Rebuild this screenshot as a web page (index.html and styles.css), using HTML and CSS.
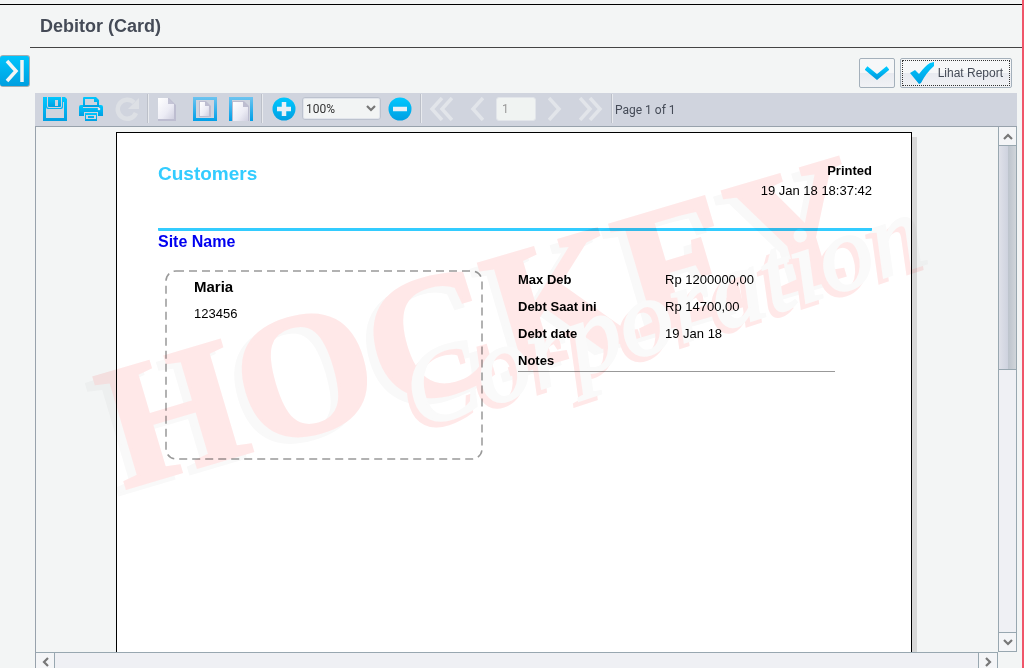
FILE: index.html
```html
<!DOCTYPE html>
<html lang="id">
<head>
<meta charset="utf-8">
<title>Debitor (Card)</title>
<link rel="stylesheet" href="styles.css">
</head>
<body>
<svg class="defs" aria-hidden="true">
  <defs>
    <linearGradient id="blue" x1="0" y1="0" x2="0" y2="1"><stop offset="0" stop-color="#00c8ff"/><stop offset="1" stop-color="#009fe2"/></linearGradient>
    <linearGradient id="sheet" x1="0" y1="0" x2="1" y2="1"><stop offset="0" stop-color="#fff"/><stop offset="0.6" stop-color="#ececf5"/><stop offset="1" stop-color="#d0d0e0"/></linearGradient>
    <linearGradient id="frame" gradientUnits="userSpaceOnUse" x1="0" y1="0" x2="0" y2="24"><stop offset="0" stop-color="#6dc4f0"/><stop offset="1" stop-color="#00a0e8"/></linearGradient>
  </defs>
</svg>
<div class="app">
  <header class="title"><h1>Debitor (Card)</h1></header>
  <div class="main">
    <aside class="side">
      <button class="expand" aria-label="Expand panel"><svg width="30" height="30" viewBox="0 0 30 30"><path d="M7 5 L16 15 L7 25" fill="none" stroke="#f3f5f5" stroke-width="3.5"/><path d="M22 4V26" stroke="#f3f5f5" stroke-width="3.5"/></svg></button>
    </aside>
    <div class="content">
      <div class="actions">
        <button class="btn more" aria-label="More"><svg width="24" height="14" viewBox="0 0 24 14"><path d="M1 2 L12 11 L23 2" fill="none" stroke="url(#blue)" stroke-width="4.5"/></svg></button>
        <button class="btn report"><svg width="24" height="22" viewBox="0 0 24 22"><path d="M0 11 L5 8 L9 12 Q15 4 20 1 L24 0 V4 Q16 11 11 21 L9 22 Z" fill="url(#blue)"/></svg><span>Lihat Report</span></button>
      </div>
      <div class="toolbar">
        <button class="tool" aria-label="Save"><svg width="24" height="24" viewBox="0 0 24 24"><path fill-rule="evenodd" fill="url(#blue)" d="M0 0H4V9Q4 11 6 11H17Q19 11 19 9V0H22L24 2V24H0Z M3 13V21H21V5H20V10Q20 12 18 12H5Q3 12 3 10Z"/><path fill-rule="evenodd" fill="url(#blue)" d="M5 0H18V9Q18 10 17 10H6Q5 10 5 9Z M12 3V9H15V3Z"/></svg></button>
        <button class="tool" aria-label="Print"><svg width="24" height="24" viewBox="0 0 24 24"><path fill-rule="evenodd" fill="url(#blue)" d="M4 1Q4 0 5 0H17L20 3V10H4Z M6 2V8H18V5H15V2Z"/><path fill="url(#blue)" d="M2 8H4V11H20V8H22Q24 8 24 10V19H19V15H5V19H0V10Q0 8 2 8Z"/><circle cx="20" cy="12" r="1.3" fill="#e0e6ee"/><path fill-rule="evenodd" fill="url(#blue)" d="M6 16H18V24H6Z M7 18V22H17V18Z M9 19H15V21H9Z"/></svg></button>
        <button class="tool" aria-label="Refresh" disabled><svg width="24" height="24" viewBox="0 0 24 24"><path d="M19 5.5A9.500 9.500 0 1 0 21 16" fill="none" stroke="#dde0e5" stroke-width="4.500"/><path d="M24 1V12H13Z" fill="#dde0e5"/></svg></button>
        <span class="sep"></span>
        <button class="tool" aria-label="Actual size"><svg width="24" height="24" viewBox="0 0 24 24"><path d="M1 1H12L19 8V24H1Z" fill="#bdbdd0"/><path d="M1 1H11V7H17V22H1Z" fill="url(#sheet)"/><path d="M11 1V7H17Z" fill="#c4c4d6"/></svg></button>
        <button class="tool" aria-label="Fit page"><svg width="24" height="24" viewBox="0 0 24 24"><path d="M1.500 1.500H22.500V22.500H1.500Z" fill="none" stroke="url(#frame)" stroke-width="3"/><path d="M6 4H13L18 9V20H6Z" fill="#bdbdd0"/><path d="M7 5H12V9H16V19H7Z" fill="url(#sheet)"/></svg></button>
        <button class="tool" aria-label="Fit width"><svg width="24" height="24" viewBox="0 0 24 24"><path d="M1.500 24V1.500H22.500V24" fill="none" stroke="url(#frame)" stroke-width="3"/><path d="M3 4H15L20 9V24H3Z" fill="#bdbdd0"/><path d="M4 5H14V10H19V24H4Z" fill="url(#sheet)"/></svg></button>
        <span class="sep"></span>
        <div class="zoom">
          <button class="tool" aria-label="Zoom in"><svg width="24" height="24" viewBox="0 0 24 24"><circle cx="12" cy="12" r="11.5" fill="url(#blue)"/><path d="M12 5V19M5 12H19" stroke="#e8f0f6" stroke-width="4.500"/></svg></button>
          <label class="pick"><select aria-label="Zoom"><option>100%</option></select><svg width="10" height="7" viewBox="0 0 10 7"><path d="M1 1L5 5L9 1" fill="none" stroke="#777" stroke-width="2.2"/></svg></label>
          <button class="tool" aria-label="Zoom out"><svg width="24" height="24" viewBox="0 0 24 24"><circle cx="12" cy="12" r="11.5" fill="url(#blue)"/><path d="M5 12H19" stroke="#e8f0f6" stroke-width="4.500"/></svg></button>
        </div>
        <span class="sep"></span>
        <div class="pager">
          <button class="tool" aria-label="First page" disabled><svg width="24" height="24" viewBox="0 0 24 24"><path d="M13 1L3 12L13 23M23 1L13 12L23 23" fill="none" stroke="#e2e5ea" stroke-width="3.500"/></svg></button>
          <button class="tool" aria-label="Previous page" disabled><svg width="14" height="24" viewBox="0 0 14 24"><path d="M13 1L3 12L13 23" fill="none" stroke="#e2e5ea" stroke-width="3.500"/></svg></button>
          <input type="text" value="1" aria-label="Page number" disabled>
          <button class="tool" aria-label="Next page" disabled><svg width="14" height="24" viewBox="0 0 14 24"><path d="M1 1L11 12L1 23" fill="none" stroke="#e2e5ea" stroke-width="3.500"/></svg></button>
          <button class="tool" aria-label="Last page" disabled><svg width="24" height="24" viewBox="0 0 24 24"><path d="M1 1L11 12L1 23M11 1L21 12L11 23" fill="none" stroke="#e2e5ea" stroke-width="3.500"/></svg></button>
        </div>
        <span class="sep last"></span>
        <span class="count">Page 1 of 1</span>
      </div>
      <div class="viewer">
        <div class="stage">
          <article class="paper">
            <div class="top">
              <h2>Customers</h2>
              <div class="printed"><b>Printed</b><span>19 Jan 18 18:37:42</span></div>
            </div>
            <h3>Site Name</h3>
            <div class="cols">
              <section class="card">
                <svg class="dash" aria-hidden="true"><rect x="0" y="1" rx="10" ry="10"/></svg>
                <b>Maria</b><span>123456</span>
              </section>
              <dl class="facts">
                <dt>Max Deb</dt><dd>Rp 1200000,00</dd>
                <dt>Debt Saat ini</dt><dd>Rp 14700,00</dd>
                <dt>Debt date</dt><dd>19 Jan 18</dd>
                <dt>Notes</dt><dd></dd>
              </dl>
            </div>
            <svg class="mark">
              <g transform="translate(7 356) rotate(-16.5)">
                <text class="word grey" x="-9" y="4">HOCKEY</text>
                <text class="word pink" x="0" y="0">HOCKEY</text>
              </g>
              <g transform="translate(301 296) rotate(-18)">
                <text class="script pink" x="-6" y="4">Corporation</text>
                <text class="script pale" x="0" y="0">Corporation</text>
              </g>
            </svg>
          </article>
        </div>
        <div class="vbar">
          <button class="arrow" aria-label="Scroll up"><svg width="10" height="7" viewBox="0 0 10 7"><path d="M1 6L5 2L9 6" fill="none" stroke="#777" stroke-width="2.2"/></svg></button>
          <div class="thumb"></div>
          <button class="arrow down" aria-label="Scroll down"><svg width="10" height="7" viewBox="0 0 10 7"><path d="M1 1L5 5L9 1" fill="none" stroke="#777" stroke-width="2.2"/></svg></button>
        </div>
        <div class="hbar">
          <button class="arrow" aria-label="Scroll left"><svg width="7" height="10" viewBox="0 0 7 10"><path d="M6 1L2 5L6 9" fill="none" stroke="#777" stroke-width="2.2"/></svg></button>
          <button class="arrow" aria-label="Scroll right"><svg width="7" height="10" viewBox="0 0 7 10"><path d="M1 1L5 5L1 9" fill="none" stroke="#777" stroke-width="2.2"/></svg></button>
        </div>
      </div>
    </div>
  </div>
</div>
</body>
</html>
```

FILE: styles.css
```css
* { box-sizing: border-box; }
body { margin: 0; background: #f3f5f5; color: #454b57; font: 12px/16px "Liberation Sans", Arial, sans-serif; }
h1, h2, h3, dl, dd { margin: 0; }
button { padding: 0; border: 0; background: none; color: inherit; font: inherit; }
svg { display: block; }
.defs { position: absolute; width: 0; height: 0; }

.app { display: flex; flex-direction: column; height: 100vh; padding-top: 4px; border-right: 2px solid #f0566a; overflow: hidden; }
.title { border-top: 1px solid #000; padding-left: 30px; }
.title h1 { height: 43px; padding-left: 10px; border-bottom: 1px solid #444; font-size: 18px; line-height: 42px; }
.main { flex: 1; display: flex; min-height: 0; }
.side { width: 35px; padding-top: 7px; }
.expand { width: 30px; height: 32px; border: 1px solid #a5acb0; border-left: 0; border-radius: 3px; background: linear-gradient(#00c4fc, #009fe0); }
.content { flex: 1; display: flex; flex-direction: column; min-width: 0; padding-right: 5px; }

.actions { display: flex; justify-content: flex-end; gap: 5px; height: 45px; padding: 10px 5px 5px 0; }
.btn { display: flex; align-items: center; justify-content: center; height: 30px; border: 1px solid #a4b0bb; border-radius: 2px; background: linear-gradient(#f6f7f8 50%, #e8eaf0 50%, #f1f2f5); }
.more { width: 36px; }
.report { gap: 4px; padding: 0 8px 0 9px; outline: 1px dotted #333; outline-offset: -3px; }

.toolbar { display: flex; align-items: center; height: 33px; padding: 0 8px 2px; background: #d0d4de; }
.tool { margin-right: 12px; }
.sep { width: 2px; height: 29px; margin: 0 8px 0 -4px; border-left: 1px solid #bcc0c9; border-right: 1px solid #e8eaee; }
.zoom, .pager { display: flex; align-items: center; }
.zoom { margin-left: 1px; }
.zoom .tool { margin-right: 6px; }
.zoom .tool:last-child { margin-right: 12px; }
.pick { display: flex; align-items: center; width: 79px; height: 23px; margin-right: 7px; padding: 0 4px 0 3px; border: 1px solid #bcc2ce; border-radius: 3px; background: #f2f4f4; box-shadow: inset 0 0 0 1px #e2e5ec; }
.pick select { flex: 1; min-width: 0; padding: 0; border: 0; appearance: none; background: none; color: #333; font: 12px/16px Roboto, sans-serif; }
.pager .tool { margin-right: 17px; }
.pager .tool:nth-child(2), .pager input { margin-right: 12px; }
.pager .tool:last-child { margin-right: 12px; }
.pager { margin-left: -1px; }
.pager input { width: 40px; height: 24px; padding: 0 5px; border: 1px solid #e2e5ea; border-radius: 3px; background: #f0f3f2; color: #999; font: 12px/16px Roboto, sans-serif; }
.sep.last { margin-right: 2px; }
.count { padding-top: 2px; font: 12px/16px Roboto, sans-serif; }

.viewer { flex: 1; display: grid; grid-template: minmax(0, 1fr) 16px / minmax(0, 1fr) 19px; min-height: 0; border-top: 1px solid #98a2ac; border-left: 1px solid #98a2ac; }
.stage { overflow: hidden; padding: 5px 86px 0 80px; }
.paper { position: relative; height: 100%; padding: 0 39px 0 41px; border: 1px solid #000; border-bottom: 0; background: #fff; box-shadow: 5px 5px 0 #d8d8d8; color: #000; font-size: 13px; }
.top { display: flex; justify-content: space-between; height: 98px; padding-top: 28px; border-bottom: 3px solid #33ccff; border-radius: 1px; }
.top h2 { color: #33ccff; font-size: 19px; line-height: 25px; }
.printed { display: flex; flex-direction: column; text-align: right; line-height: 20px; }
h3 { color: #0000f0; font-size: 16px; line-height: 22px; }
.cols { display: grid; grid-template-columns: 316px 317px; gap: 36px; padding: 17px 0 0 8px; }
.card { position: relative; display: flex; flex-direction: column; height: 190px; padding: 7px 28px; }
.card b { font-size: 15px; line-height: 20px; }
.card span { line-height: 33px; }
.dash { position: absolute; inset: 0; width: 100%; height: 100%; overflow: visible; }
.dash rect { width: 100%; height: 188px; fill: none; stroke: #999; stroke-width: 1.5; stroke-dasharray: 8 5; }
.facts { display: grid; grid-template-columns: 147px 1fr; grid-auto-rows: 27px; align-self: start; height: 102px; border-bottom: 1px solid #999; line-height: 20px; }
.facts dt { font-weight: bold; }

.mark { position: absolute; left: 0; top: 0; width: 100%; height: 100%; overflow: visible; pointer-events: none; mix-blend-mode: multiply; }
.word { font: bold 176px "Liberation Serif", serif; stroke-width: 3; }
.script { font: italic 108px "Brush Script MT", "Liberation Serif", serif; stroke-width: 2; }
.grey { fill: #f9f9f9; stroke: #f9f9f9; }
.pink { fill: #ffe8e8; stroke: #ffe8e8; }
.pale { fill: #fafafa; stroke: #fafafa; }

.vbar { display: flex; flex-direction: column; border: 1px solid #98a7b0; border-top: 0; background: #eff0f4; }
.arrow { display: flex; align-items: center; justify-content: center; width: 17px; height: 18px; background: #f4f5f7; }
.down { margin-top: auto; height: 19px; border-top: 1px solid #98a7b0; }
.thumb { height: 43%; border: solid #98a7b0; border-width: 1px 0; background: linear-gradient(90deg, #dfe1e9, #cfd3df 50%, #bcc3cc 52%, #d0d5da); }
.hbar { display: flex; justify-content: space-between; border: solid #98a7b0; border-width: 1px 1px 0 0; background: #eff0f4; }
.hbar .arrow { width: 19px; height: 17px; border-left: 1px solid #98a7b0; }
.hbar .arrow:first-child { border-left: 0; border-right: 1px solid #98a7b0; }
```
